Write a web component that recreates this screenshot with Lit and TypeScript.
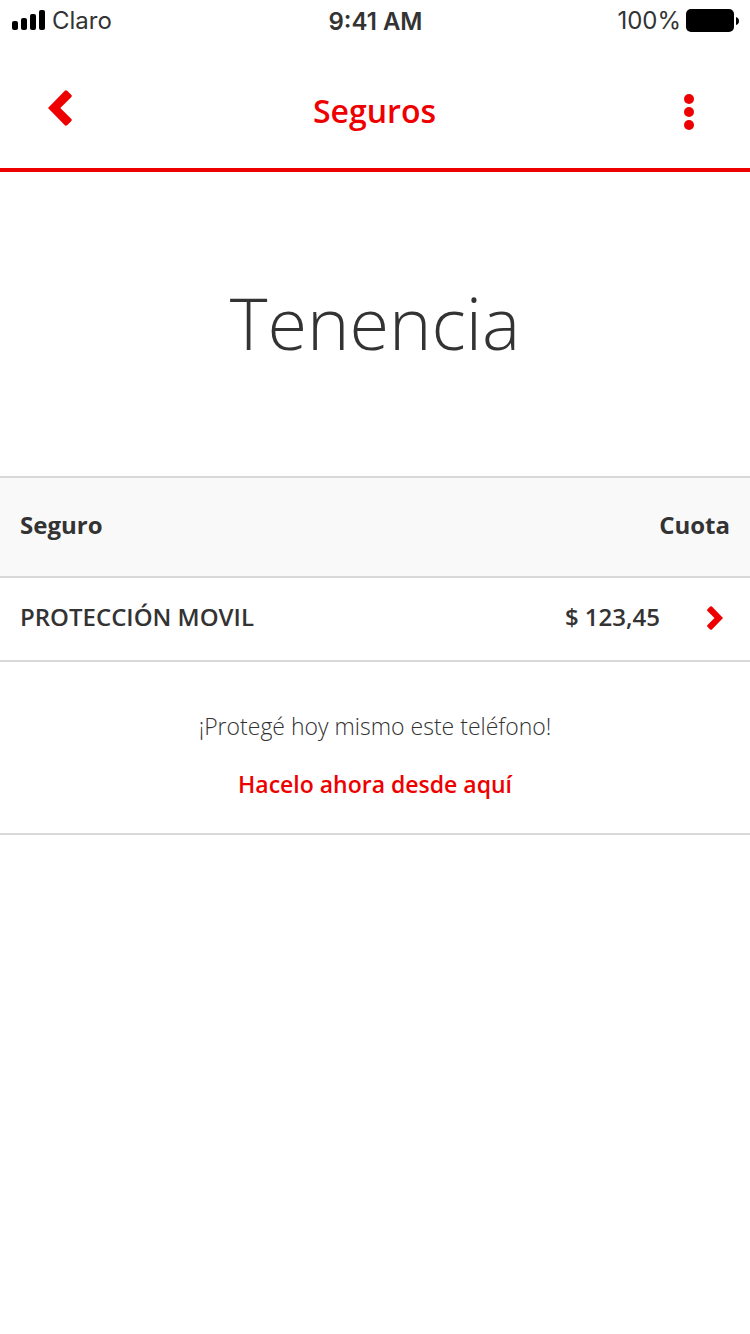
import { LitElement, html, css } from "lit";
import { customElement } from "lit/decorators.js";

@customElement("app-root")
export class AppRoot extends LitElement {
  static styles = css`
    :host {
      display: block;
      min-height: 100vh;
      background: #fff;
      color: #333;
      font-family: "Open Sans", sans-serif;
    }
    * { box-sizing: border-box; }
    .status {
      display: grid;
      grid-template-columns: 1fr auto 1fr;
      align-items: center;
      height: 42px;
      padding: 0 11px 0 12px;
      font: 400 24px/42px Inter, sans-serif;
    }
    .carrier { display: flex; align-items: center; gap: 6px; }
    .time { padding-top: 2px; line-height: 40px; font-weight: 600; }
    .battery { display: flex; align-items: center; justify-content: flex-end; gap: 5px; }
    svg { display: block; flex: none; }
    .bar {
      display: grid;
      grid-template-columns: 80px 1fr 80px;
      align-items: center;
      height: 130px;
      padding: 8px 21px 0 20px;
      border-bottom: 4px solid #ee0000;
      color: #ee0000;
    }
    .bar h1 {
      margin: 0;
      padding-top: 4px;
      text-align: center;
      font-size: 32px;
      line-height: 44px;
      font-weight: 600;
    }
    button {
      display: flex;
      align-items: center;
      justify-content: center;
      width: 80px;
      height: 80px;
      margin: 0;
      padding: 0;
      border: 0;
      background: none;
      color: #ee0000;
      cursor: pointer;
    }
    .back { padding-bottom: 2px; }
    .menu { padding-top: 6px; }
    h2 {
      margin: 0;
      padding: 98px 20px 102px;
      text-align: center;
      font-size: 72px;
      line-height: 104px;
      font-weight: 300;
    }
    table { width: 100%; border-collapse: separate; border-spacing: 0; font-size: 24px; line-height: 32px; }
    th, td { padding: 0 0 4px; text-align: left; }
    th { height: 102px; background: #f9f9f9; border-top: 2px solid #d8d8d8; border-bottom: 2px solid #d8d8d8; font-weight: 700; }
    td { height: 84px; border-bottom: 2px solid #d8d8d8; font-weight: 600; }
    .name { padding-left: 20px; }
    th.fee { padding-right: 20px; }
    .fee { text-align: right; }
    .go { width: 90px; padding-bottom: 2px; }
    .go button { width: 48px; height: 48px; margin-left: 31px; }
    .promo { padding: 47px 20px 32px; border-bottom: 2px solid #d8d8d8; text-align: center; font-size: 23px; line-height: 34px; }
    .promo p { margin: 0 0 24px; font-weight: 300; }
    .promo a { color: #ee0000; font-weight: 600; text-decoration: none; }
  `;

  render() {
    return html`
      <div class="status">
        <span class="carrier">
          <svg width="34" height="22" viewBox="0 0 34 22" aria-hidden="true">
            <rect x="0" y="11" width="6" height="9" rx="2" />
            <rect x="9" y="8" width="6" height="12" rx="2" />
            <rect x="18" y="4" width="6" height="16" rx="2" />
            <rect x="27" y="0" width="6" height="20" rx="2" />
          </svg>
          Claro
        </span>
        <span class="time">9:41 AM</span>
        <span class="battery">
          100%
          <svg width="53" height="24" viewBox="0 0 53 24" aria-hidden="true">
            <rect width="48" height="23" rx="5" />
            <path d="M50 8q3 1 3 4t-3 4z" />
          </svg>
        </span>
      </div>
      <header class="bar">
        <button class="back" aria-label="Volver">
          <svg width="24" height="36" viewBox="0 0 24 36" fill="currentColor" aria-hidden="true">
            <path d="M0 18 16.600 1q1.400-1.400 2.800 0L23.200 4.800q1.200 1.200 0 2.400L12.300 18 23.200 28.800q1.200 1.200 0 2.400L19.400 35q-1.400 1.400-2.800 0z" />
          </svg>
        </button>
        <h1>Seguros</h1>
        <button class="menu" aria-label="Menú">
          <svg width="12" height="36" viewBox="0 0 12 36" fill="currentColor" aria-hidden="true">
            <circle cx="6" cy="5" r="5" /><circle cx="6" cy="18" r="5" /><circle cx="6" cy="31" r="5" />
          </svg>
        </button>
      </header>
      <main>
        <h2>Tenencia</h2>
        <table>
          <thead>
            <tr><th class="name" scope="col">Seguro</th><th class="fee" scope="col" colspan="2">Cuota</th></tr>
          </thead>
          <tbody>
            <tr>
              <td class="name">PROTECCIÓN MOVIL</td>
              <td class="fee">$ 123,45</td>
              <td class="go">
                <button aria-label="Ver detalle">
                  <svg width="16" height="24" viewBox="0 0 16 24" fill="currentColor" aria-hidden="true">
                    <path d="M16 12 4.900 23.400q-.9.900-1.800 0L.5 20.800q-.9-.9 0-1.800L7.500 12 .5 5q-.9-.9 0-1.800L3.100.6q.9-.9 1.800 0z" />
                  </svg>
                </button>
              </td>
            </tr>
          </tbody>
        </table>
        <section class="promo">
          <p>¡Protegé hoy mismo este teléfono!</p>
          <a href="#">Hacelo ahora desde aquí</a>
        </section>
      </main>
    `;
  }
}
